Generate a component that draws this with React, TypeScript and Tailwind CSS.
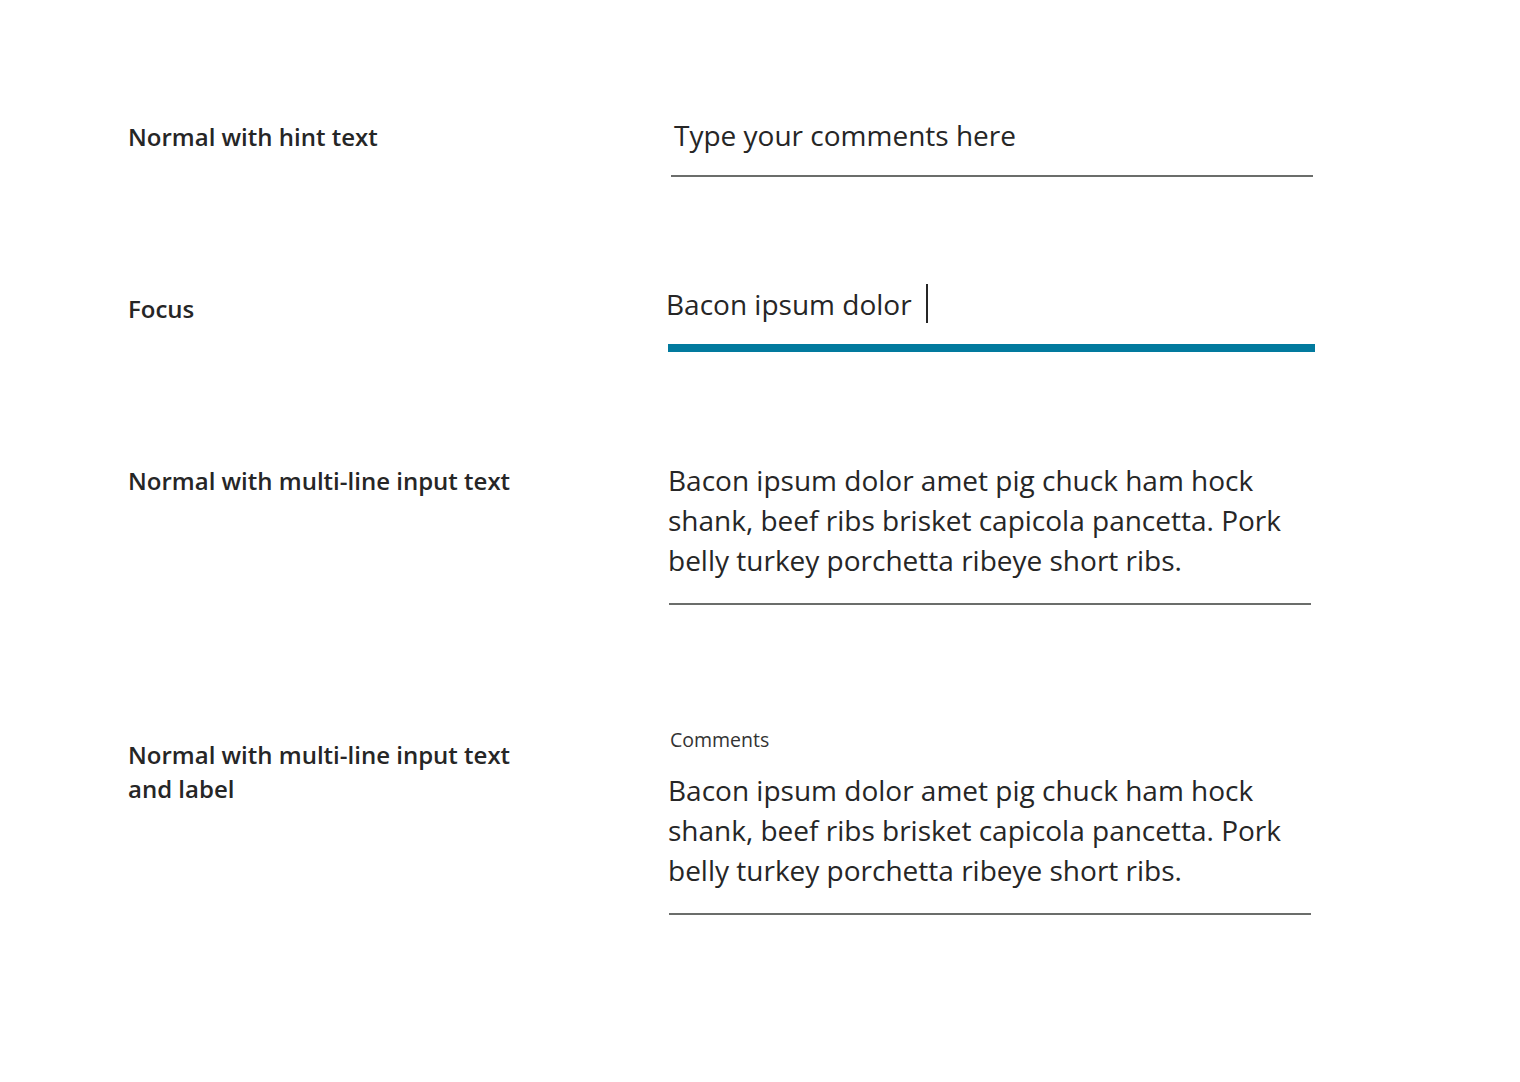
export default function App() {
  const body = "Bacon ipsum dolor amet pig chuck ham hock shank, beef ribs brisket capicola pancetta. Pork belly turkey porchetta ribeye short ribs.";
  return (
    <div className="min-h-screen bg-white text-[#262626]" style={{ fontFamily: '"Open Sans", "Noto Sans", sans-serif' }}>
      <div className="pl-[128px] pt-[116px] pb-[100px]">
        {/* Row 1 */}
        <div className="flex items-start">
          <div className="w-[540px] mt-[4px] text-[24px] leading-[34px] font-semibold">Normal with hint text</div>
          <div className="w-[642px] ml-[3px]">
            <div className="pl-[3px] -mt-[1px] text-[28px] leading-[40px]">Type your comments here</div>
            <div className="mt-[20px] h-[2px] bg-[#6b6d6b]" />
          </div>
        </div>

        {/* Row 2 */}
        <div className="flex items-start mt-[108px]">
          <div className="w-[540px] mt-[7px] text-[24px] leading-[34px] font-semibold">Focus</div>
          <div className="w-[647px]">
            <div className="flex items-start -ml-[2px] text-[28px] leading-[40px]">
              <span className="-mt-[1px]">Bacon ipsum dolor</span>
              <span className="inline-block w-[2px] h-[39px] -mt-[1px] ml-[14px] bg-[#262626]" />
            </div>
            <div className="mt-[20px] h-[8px] bg-[#027a9e]" />
          </div>
        </div>

        {/* Row 3 */}
        <div className="flex items-start mt-[109px]">
          <div className="w-[540px] mt-[3px] text-[24px] leading-[34px] font-semibold">Normal with multi-line input text</div>
          <div className="w-[643px]">
            <div className="-mt-[1px] text-[28px] leading-[40px]">{body}</div>
            <div className="mt-[23px] ml-[1px] h-[2px] bg-[#6b6d6b]" />
          </div>
        </div>

        {/* Row 4 */}
        <div className="flex items-start mt-[123px]">
          <div className="w-[540px] mt-[10px] text-[24px] leading-[34px] font-semibold">
            Normal with multi-line input text
            <br />
            and label
          </div>
          <div className="w-[643px]">
            <div className="pl-[2px] text-[19.5px] leading-[24px] text-[#333333]">Comments</div>
            <div className="mt-[18px] text-[28px] leading-[40px]">{body}</div>
            <div className="mt-[23px] ml-[1px] h-[2px] bg-[#6b6d6b]" />
          </div>
        </div>
      </div>
    </div>
  );
}
